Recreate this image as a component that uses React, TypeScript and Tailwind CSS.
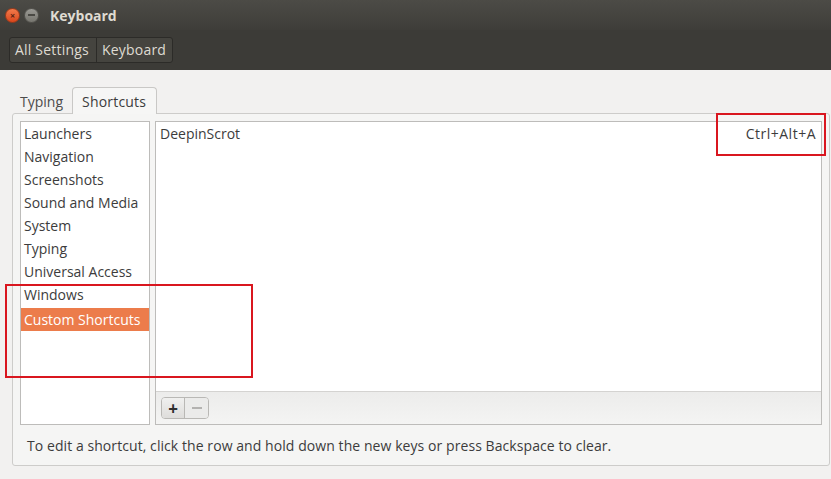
const categories = [
  "Launchers",
  "Navigation",
  "Screenshots",
  "Sound and Media",
  "System",
  "Typing",
  "Universal Access",
  "Windows",
];

const font = { fontFamily: '"Open Sans", "DejaVu Sans", sans-serif' };

const App = () => {
  return (
    <div
      className="relative w-[831px] h-[479px] overflow-hidden bg-[#f2f1f0] text-[14px] text-[#3c3c3c]"
      style={font}
    >
      {/* title bar */}
      <div className="h-[30px] flex items-center bg-gradient-to-b from-[#4c4b46] to-[#3e3d39] pl-[5px]">
        <div className="w-[15px] h-[15px] rounded-full bg-gradient-to-b from-[#f27a4a] to-[#d9461b] border border-[#9c3a1a] flex items-center justify-center text-[9px] leading-none text-[#5a2311] font-bold">
          ×
        </div>
        <div className="ml-[4px] w-[15px] h-[15px] rounded-full bg-gradient-to-b from-[#9a9994] to-[#77766f] border border-[#55544f] flex items-center justify-center">
          <div className="w-[7px] h-[2px] bg-[#4a4944]" />
        </div>
        <span className="ml-[11px] font-bold text-[#dfdbd2] text-[14px]">Keyboard</span>
      </div>

      {/* toolbar */}
      <div className="h-[40px] bg-[#3c3b37] flex items-center pl-[9px] pb-[1px]">
        <div className="flex h-[26px] rounded-[3px] border border-[#2c2b28] bg-[#45443f] text-[#dfdbd2] tracking-[0.2px]">
          <div className="w-[87px] pl-[5px] flex items-center border-r border-[#2c2b28]">All Settings</div>
          <div className="w-[75px] pl-[5px] flex items-center">Keyboard</div>
        </div>
      </div>

      {/* content */}
      <div className="pt-[17px] pl-[12px]">
        <div className="flex items-end h-[26px] pl-[2px]">
          <div className="w-[58px] h-[23px] pl-[6px] flex items-center text-[#4c4c4c]">Typing</div>
          <div className="w-[85px] h-[27px] pl-[9px] flex items-center bg-[#f6f6f5] border border-b-0 border-[#c9c8c6] rounded-t-[4px] -mb-[1px] relative z-10 tracking-[0.2px]">
            Shortcuts
          </div>
        </div>

        <div className="w-[818px] h-[353px] border border-[#cdccca] rounded-[3px] bg-[#f5f5f4] px-[7px] pt-[7px]">
          <div className="flex gap-[5px] h-[304px]">
            <div className="w-[130px] h-full bg-white border border-[#bdbcba]">
              {categories.map((c) => (
                <div key={c} className="h-[23px] pl-[3px] flex items-center whitespace-nowrap">
                  {c}
                </div>
              ))}
              <div className="mt-[2px] h-[23px] pl-[3px] flex items-center bg-[#ec7c4b] text-white whitespace-nowrap">
                Custom Shortcuts
              </div>
            </div>

            <div className="w-[667px] h-full border border-[#bdbcba] flex flex-col">
              <div className="h-[269px] bg-white">
                <div className="h-[23px] pl-[4px] pr-[5px] flex items-center justify-between">
                  <span>DeepinScrot</span>
                  <span className="tracking-[0.5px]">Ctrl+Alt+A</span>
                </div>
              </div>
              <div className="flex-1 bg-gradient-to-b from-[#ececeb] to-[#f4f4f3] border-t border-[#d4d3d1] pl-[5px] pt-[5px]">
                <div className="flex w-[48px] h-[22px] rounded-[4px] border border-[#b9b8b5] overflow-hidden">
                  <div className="w-[23px] flex items-center justify-center bg-gradient-to-b from-[#f0f0ef] to-[#dedddb] border-r border-[#b9b8b5] text-[#2e2e2e] text-[17px] font-bold leading-none">
                    +
                  </div>
                  <div className="flex-1 flex items-center justify-center bg-[#ebebea]">
                    <div className="w-[10px] h-[2px] bg-[#b3b2b0]" />
                  </div>
                </div>
              </div>
            </div>
          </div>
          <div className="h-[41px] flex items-center pl-[7px] text-[#3c3c3c] tracking-[0.07px]">
            To edit a shortcut, click the row and hold down the new keys or press Backspace to clear.
          </div>
        </div>
      </div>

      {/* annotations */}
      <div className="absolute left-[716px] top-[113px] w-[110px] h-[43px] border-2 border-[#d9161f]" />
      <div className="absolute left-[5px] top-[284px] w-[248px] h-[94px] border-2 border-[#d9161f]" />
    </div>
  );
};

export default App;
